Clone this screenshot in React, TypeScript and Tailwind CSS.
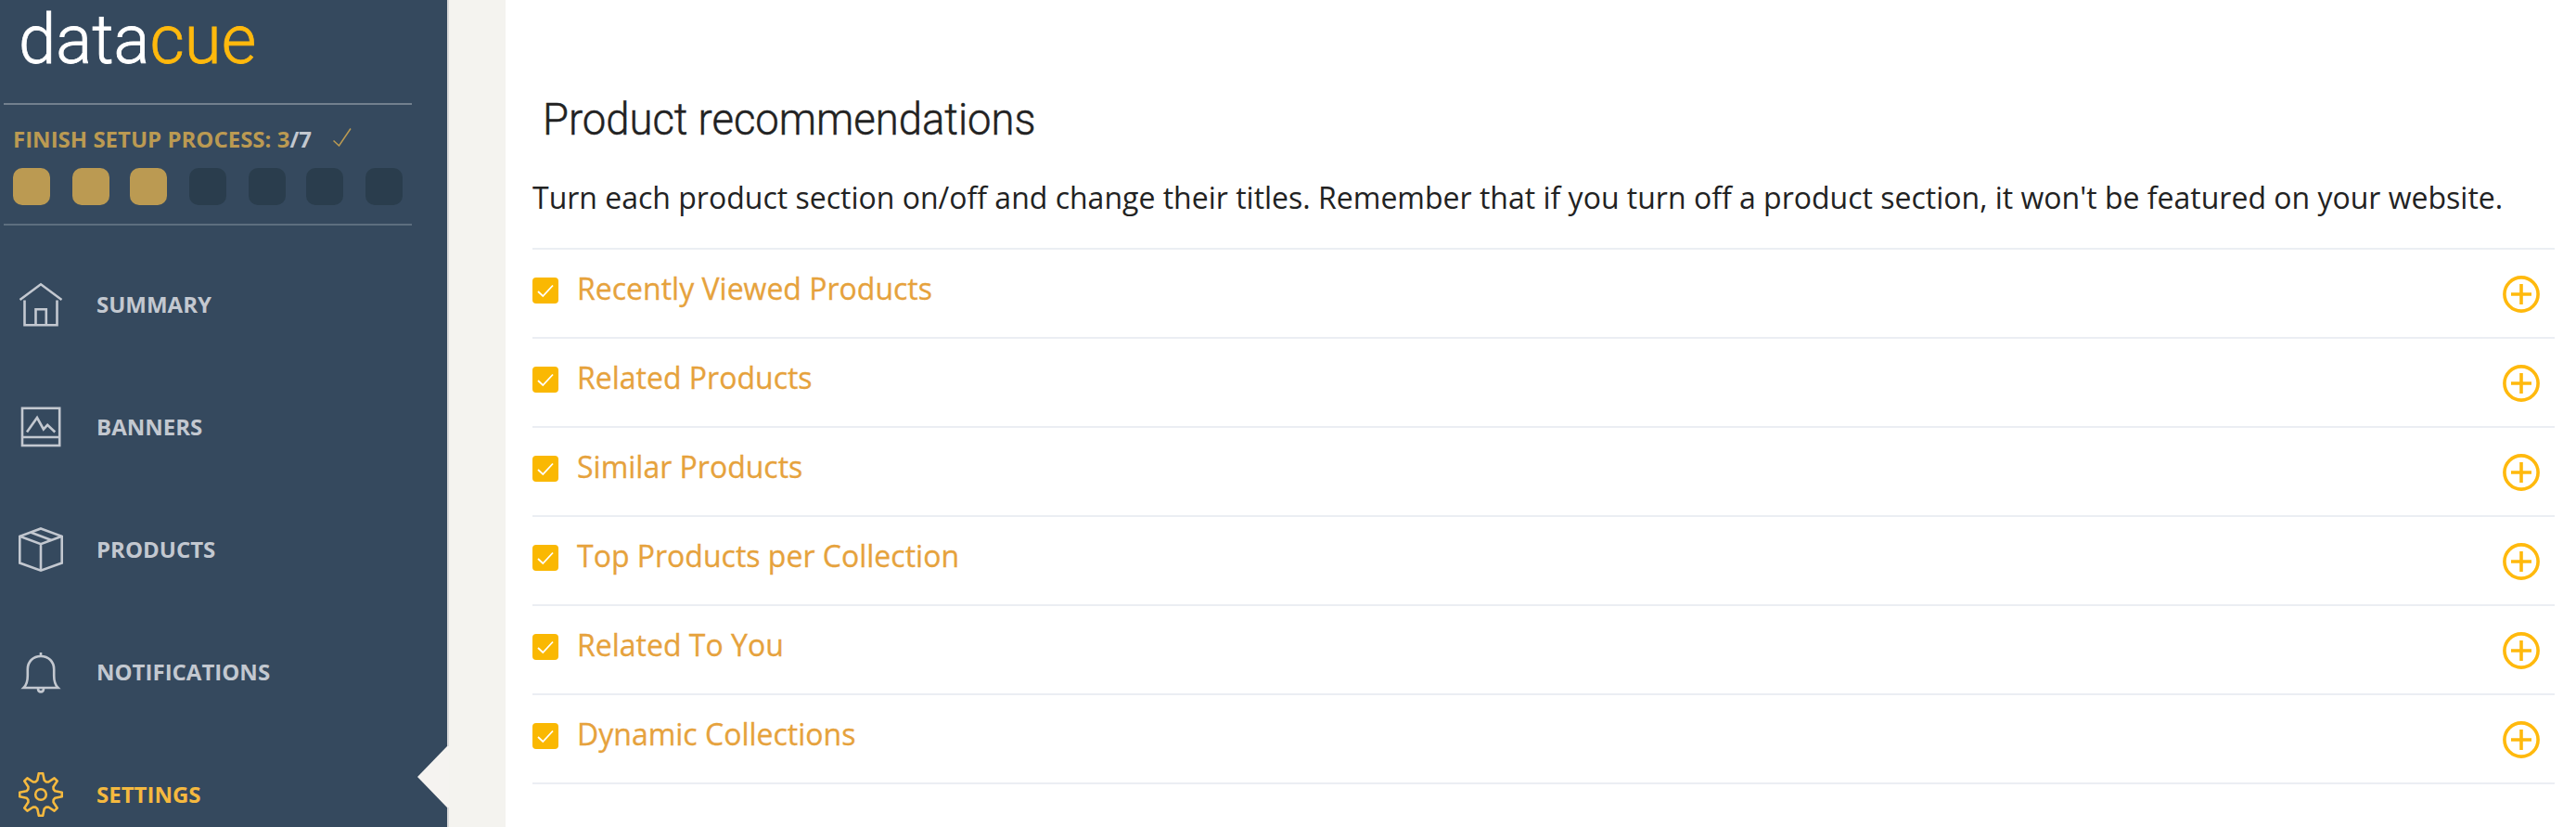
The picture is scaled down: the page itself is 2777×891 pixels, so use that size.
import React from "react";

const GEAR = (() => {
  const tooth = [[-5.6, -13.7], [-3.7, -15.4], [-2.2, -22.8], [2.2, -22.8], [3.7, -15.4], [5.6, -13.7]];
  const pts: string[] = [];
  for (let i = 0; i < 8; i++) {
    const a = (i * Math.PI) / 4;
    for (const [x, y] of tooth) {
      pts.push(`${(24 + x * Math.cos(a) - y * Math.sin(a)).toFixed(2)},${(24 + x * Math.sin(a) + y * Math.cos(a)).toFixed(2)}`);
    }
  }
  return pts.join(" ");
})();

const nav = [
  {
    label: "SUMMARY",
    icon: (
      <>
        <path d="M1.5 19 L24 2.3 L46.500 19" />
        <path d="M6.500 19.500 V46.300 H41.500 V19.500" />
        <path d="M18.500 46 V29.300 H29.800 V46" />
      </>
    ),
  },
  {
    label: "BANNERS",
    icon: (
      <>
        <rect x="4" y="3.800" width="40.200" height="40.200" />
        <path d="M4 35 H44" />
        <path d="M9 29.500 L20 14 L26.900 26.500 L31.200 21.800 L39.300 29.500" />
      </>
    ),
  },
  {
    label: "PRODUCTS",
    icon: (
      <>
        <path d="M24 1.500 L46.700 9.800 V38.500 L24 46.600 L1.300 38.500 V9.800 Z" />
        <path d="M1.300 9.800 L24 18.200 L46.700 9.800 M24 18.200 V46.600" />
        <path d="M13 5.500 L35.500 14" />
      </>
    ),
  },
  {
    label: "NOTIFICATIONS",
    icon: (
      <>
        <path d="M24 3 V7" />
        <path d="M24 7 C15.500 7 9.800 13 9.800 21 V28 C9.800 34 8.500 38 5.500 41 H42.500 C39.500 38 38.200 34 38.200 28 V21 C38.200 13 32.500 7 24 7 Z" />
        <path d="M21 42 C21 46.500 27 46.500 27 42" />
      </>
    ),
  },
  {
    label: "SETTINGS",
    active: true,
    icon: (
      <>
        <polygon points={GEAR} strokeLinejoin="round" />
        <circle cx="24" cy="24" r="5.800" />
      </>
    ),
  },
];

const steps = [
  "bg-[#bb9a52]",
  "ml-6 bg-[#bb9a52]",
  "ml-[22px] bg-[#bb9a52]",
  "ml-6 bg-[#2a3d4d]",
  "ml-6 bg-[#2a3d4d]",
  "ml-[22px] bg-[#2a3d4d]",
  "ml-6 bg-[#2a3d4d]",
];

const sections = [
  "Recently Viewed Products",
  "Related Products",
  "Similar Products",
  "Top Products per Collection",
  "Related To You",
  "Dynamic Collections",
];

export default function App() {
  return (
    <div className="flex h-[891px] w-[2777px] overflow-hidden bg-[#f4f3ef] font-['Open_Sans',sans-serif]">
      <aside className="relative h-full w-[484px] shrink-0 border-r-2 border-[#d9d9d9] bg-[#35495e]">
        <div className="h-[111px] pl-[20px]">
          <div className="origin-left scale-x-[0.98] whitespace-nowrap font-['Roboto',sans-serif] text-[74px] leading-[86px] font-light text-white [-webkit-text-stroke:0.8px] [stroke-linejoin:round]">
            data<span className="text-[#ffb90d]">cue</span>
          </div>
        </div>
        <div className="ml-1 h-[132px] w-[440px] border-y-2 border-t-[#72808e] border-b-[#5d6e7f] px-[10px]">
          <div className="flex h-[68px] items-center pt-[5px]">
            <span className="whitespace-nowrap text-2xl leading-8 font-bold text-[#bb9a52]">
              FINISH SETUP PROCESS: 3<span className="text-[#c3c8d0]">/7</span>
            </span>
            <svg className="mb-1 ml-[23px] h-5 w-5" viewBox="0 0 20 20" fill="none" stroke="#bb9a52" strokeWidth="1.5">
              <path d="M0.5 13.500 L6.500 19 L19 0.500" />
            </svg>
          </div>
          <div className="flex">
            {steps.map((c, i) => (
              <span key={i} className={`size-10 rounded-[10px] ${c}`} />
            ))}
          </div>
        </div>
        <nav className="mt-[19px] flex flex-col">
          {nav.map((n) => (
            <a key={n.label} className={`flex h-[132px] items-center pl-5 ${n.active ? "text-[#f5b93f]" : "text-[#c3c8d0]"}`}>
              <svg className="size-12 shrink-0" viewBox="0 0 48 48" fill="none" stroke="currentColor" strokeWidth="2.600">
                {n.icon}
              </svg>
              <span className="ml-9 whitespace-nowrap text-2xl leading-8 font-bold">{n.label}</span>
            </a>
          ))}
        </nav>
        <svg className="absolute top-[804px] left-[450px] h-[66px] w-[34px]" viewBox="0 0 34 66">
          <path d="M0 33 L32 0 H34 V66 H32 Z" fill="#f5f3f0" />
        </svg>
      </aside>
      <main className="ml-[61px] h-full flex-1 bg-white pt-[89px] pr-[23px] pl-[29px]">
        <h1 className="ml-[11px] h-[80px] origin-left scale-x-[0.946] font-['Roboto',sans-serif] whitespace-nowrap text-[48px] leading-[80px] font-light text-[#222] [-webkit-text-stroke:0.5px]">
          Product recommendations
        </h1>
        <p className="h-[98px] pt-[20px] whitespace-nowrap text-[32px] leading-[48px] text-[#222]">
          Turn each product section on/off and change their titles. Remember that if you turn off a product section, it won't be featured on your website.
        </p>
        <ul className="border-t-2 border-[#ebeef3]">
          {sections.map((s) => (
            <li key={s} className="flex h-24 items-start border-b-2 border-[#ebeef3]">
              <span className="mt-[30px] flex size-7 shrink-0 rounded bg-[#fab802]">
                <svg className="size-7" viewBox="0 0 28 28" fill="none" stroke="white" strokeWidth="1.800">
                  <path d="M6 15 L11.300 20 L22 8.500" />
                </svg>
              </span>
              <span className="mt-[18px] ml-5 whitespace-nowrap text-[32px] leading-[48px] text-[#e6a23c] [-webkit-text-stroke:0.3px]">{s}</span>
              <svg className="mt-7 mr-4 ml-auto size-10 shrink-0" viewBox="0 0 40 40" fill="none" stroke="#ffb90d" strokeWidth="3.600">
                <circle cx="20" cy="20" r="18.100" />
                <path d="M9 20 H31 M20 9 V31" />
              </svg>
            </li>
          ))}
        </ul>
      </main>
    </div>
  );
}
